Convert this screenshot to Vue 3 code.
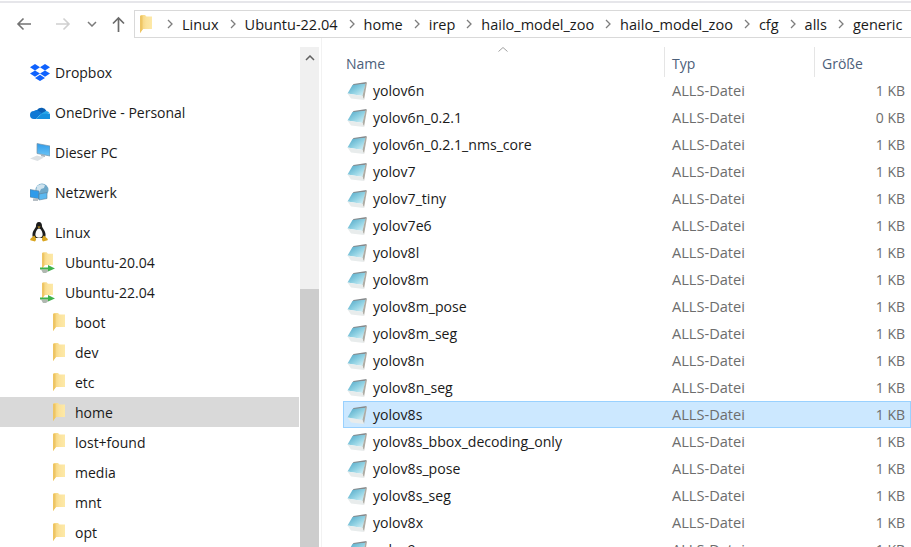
<template>
  <div class="explorer">
    <svg class="defs" width="0" height="0" aria-hidden="true">
      <defs>
        <linearGradient id="folderFill" x1="0" y1="0" x2="1" y2="0">
          <stop offset="0" stop-color="#f3cf73" />
          <stop offset="0.5" stop-color="#fbe29b" />
          <stop offset="1" stop-color="#fde9a8" />
        </linearGradient>
        <linearGradient id="allsFill" x1="0" y1="0" x2="1" y2="1">
          <stop offset="0" stop-color="#4aa3c4" />
          <stop offset="0.55" stop-color="#93d3e4" />
          <stop offset="1" stop-color="#e0f5f9" />
        </linearGradient>
        <linearGradient id="screenFill" x1="0" y1="0" x2="0" y2="1">
          <stop offset="0" stop-color="#2f9bea" />
          <stop offset="1" stop-color="#6cc4f5" />
        </linearGradient>
      </defs>
      <symbol id="folder" viewBox="0 0 12 18">
        <path d="M0 1 1 0h4l1.500 1.500H12V14H3L0 18Z" fill="url(#folderFill)" />
        <path d="M0 1h2.500v13.500L0 18Z" fill="#eec564" />
      </symbol>
      <symbol id="alls" viewBox="0 0 20 18">
        <path d="M6.500 2 19.500 0l-.5 2.200L5.500 3.500Z" fill="#85898c" />
        <path d="M5.500 3 18.500 1.800 15.500 14 .5 11.500Z" fill="url(#allsFill)" />
        <path d="M18.500 1 20 .5 17 18l-1.500-4Z" fill="#aeaca4" />
        <path d="M.5 11.500l15 2.500 1.500 4-13-1.500Z" fill="#e8ecec" />
      </symbol>
    </svg>

    <div class="top-line"></div>

    <header class="toolbar">
      <nav class="nav-buttons">
        <svg class="nav-icon back" width="16" height="14" viewBox="0 0 16 14">
          <path d="M15 7H2M7.500 1.500 2 7l5.500 5.500" fill="none" stroke="#737373" stroke-width="1.600" />
        </svg>
        <svg class="nav-icon forward" width="16" height="14" viewBox="0 0 16 14">
          <path d="M1 7h13M8.500 1.500 14 7l-5.500 5.500" fill="none" stroke="#d0d0d0" stroke-width="1.600" />
        </svg>
        <svg class="nav-icon recent" width="10" height="6" viewBox="0 0 10 6">
          <path d="M1 1l4 4 4-4" fill="none" stroke="#7b7b7b" stroke-width="1.500" />
        </svg>
        <svg class="nav-icon up" width="13" height="16" viewBox="0 0 13 16">
          <path d="M6.500 16V2M1 7.500 6.500 2 12 7.500" fill="none" stroke="#6b6b6b" stroke-width="1.700" />
        </svg>
      </nav>
      <div class="address">
        <svg class="address-folder" width="12" height="18" viewBox="0 0 12 18"><use href="#folder" /></svg>
        <span v-for="part in crumbs" :key="part.id" class="crumb">
          <svg class="chevron" width="6" height="10" viewBox="0 0 6 10">
            <path d="M1 1l4 4-4 4" fill="none" stroke="#7d7d7d" stroke-width="1.300" />
          </svg>
          <span class="crumb-text">{{ part.label }}</span>
        </span>
      </div>
    </header>

    <main class="body">
      <aside class="side">
        <ul class="tree">
          <li
            v-for="item in tree"
            :key="item.label"
            class="tree-row"
            :class="[item.level, { selected: item.label === 'home', spaced: item.spaced }]"
          >
            <span class="tree-icon">
              <svg v-if="item.icon === 'dropbox'" width="20" height="18" viewBox="0 0 20 18">
                <path
                  d="M5 1 0 4.200l5 3.200 5-3.200Zm10 0-5 3.200 5 3.200 5-3.200ZM0 10.600l5 3.200 5-3.200L5 7.400Zm15-3.200-5 3.200 5 3.200 5-3.200ZM5 15l5 3 5-3-5-3.200Z"
                  fill="#0f62fe"
                />
              </svg>
              <svg v-else-if="item.icon === 'onedrive'" width="20" height="14" viewBox="0 0 20 14">
                <path d="M7 5a5.500 5.500 0 0 1 9.500 1L11 10 6 6Z" fill="#0a5fb4" />
                <path d="M4 6a4 4 0 0 1 3-1l5 3-6 6H4A4 4 0 0 1 4 6Z" fill="#0f78d4" />
                <path d="M6 14l6-6 4-2a4 4 0 0 1 3.500 2Z" fill="#28a8ea" />
                <path d="M6 14h11a3 3 0 0 0 2.600-5.500L12 9Z" fill="#1490df" />
              </svg>
              <svg v-else-if="item.icon === 'pc'" width="20" height="19" viewBox="0 0 20 19">
                <path d="M7 .5 20 3v10L7 10.500Z" fill="url(#screenFill)" stroke="#7d95a8" stroke-width=".7" />
                <path d="M11 11.500l4 .8v1.700l-4-.8Z" fill="#aab6bf" />
                <path d="M0 15.500 7 12.500l7 2L7.500 18Z" fill="#dde1e4" />
              </svg>
              <svg v-else-if="item.icon === 'network'" width="20" height="19" viewBox="0 0 20 19">
                <circle cx="12" cy="7" r="6.500" fill="#6fa8c9" />
                <path d="M7 3c3-2 6-2 8-1l-1 3-3 1-2 4-3-1Z" fill="#cfe3ee" />
                <path d="M0 6.500 9 8v8L0 14Z" fill="#2f9bea" stroke="#5c7f99" stroke-width=".6" />
                <path d="M9 11l8-1.500v6L9 17Z" fill="#5cb8f0" stroke="#5c7f99" stroke-width=".6" />
                <path d="M3 15.500h5V18H3Z" fill="#b6bec4" />
              </svg>
              <svg v-else-if="item.icon === 'linux'" width="18" height="20" viewBox="0 0 18 20">
                <path d="M9 0c-2.200 0-3 1.800-3 4 0 2-3 4-3.500 8C2.200 14 3 16 4 16h10c1 0 1.800-2 1.500-4-.5-4-3.500-6-3.500-8 0-2.200-.8-4-3-4Z" fill="#1c1c1c" />
                <path d="M9 6.500c-1.600 0-3.600 3-3.600 6.300 0 1.700 1.500 3 3.600 3s3.600-1.300 3.600-3c0-3.300-2-6.300-3.600-6.300Z" fill="#fafafa" />
                <path d="M7.400 4.600h3.200L9 6.200Z" fill="#d9a520" />
                <path d="M4 13.500.5 16.800c-.7.800 0 1.500.8 1.700l3.700 1 1-1.500c.3-1-.5-3.500-2-4.500Zm10 0 3.500 3.300c.7.800 0 1.500-.8 1.700l-3.700 1-1-1.500c-.3-1 .5-3.500 2-4.500Z" fill="#d9a520" />
              </svg>
              <svg v-else-if="item.icon === 'mount'" width="15" height="21" viewBox="0 0 15 21">
                <use href="#folder" x="2" y="0" width="11" height="17" />
                <path d="M0 15.500h8V13l7 3.500-7 3v-2H0Z" fill="#3eb24a" />
                <path d="M1 17.500h7v2l-2 1.500H3Z" fill="#8f9a8f" opacity=".7" />
              </svg>
              <svg v-else width="12" height="18" viewBox="0 0 12 18"><use href="#folder" /></svg>
            </span>
            <span class="tree-label">{{ item.label }}</span>
          </li>
        </ul>
      </aside>

      <div class="scrollbar">
        <svg class="scroll-up" width="10" height="6" viewBox="0 0 10 6">
          <path d="M1 5l4-4 4 4" fill="none" stroke="#606060" stroke-width="1.500" />
        </svg>
        <div class="scroll-thumb"></div>
      </div>

      <section class="files">
        <div class="file-head">
          <svg class="sort-arrow" width="10" height="5" viewBox="0 0 10 5">
            <path d="M.5 4.500 5 .5l4.500 4" fill="none" stroke="#a0a0a0" />
          </svg>
          <div class="col col-name">Name</div>
          <div class="col col-type head-sep">Typ</div>
          <div class="col col-size head-sep">Größe</div>
        </div>
        <div
          v-for="file in files"
          :key="file.name"
          class="file-row"
          :class="{ selected: file.name === 'yolov8s' }"
        >
          <div class="col-name name-cell">
            <svg class="file-icon" width="20" height="18" viewBox="0 0 20 18"><use href="#alls" /></svg>
            <span>{{ file.name }}</span>
          </div>
          <div class="col-type meta">ALLS-Datei</div>
          <div class="col-size size">{{ file.size }} KB</div>
        </div>
      </section>
    </main>
  </div>
</template>

<script setup>
const crumbs = [
  'Linux',
  'Ubuntu-22.04',
  'home',
  'irep',
  'hailo_model_zoo',
  'hailo_model_zoo',
  'cfg',
  'alls',
  'generic',
].map((label, id) => ({ label, id }))

const tree = [
  { label: 'Dropbox', icon: 'dropbox', level: 'l0' },
  { label: 'OneDrive - Personal', icon: 'onedrive', level: 'l0', spaced: true },
  { label: 'Dieser PC', icon: 'pc', level: 'l0', spaced: true },
  { label: 'Netzwerk', icon: 'network', level: 'l0', spaced: true },
  { label: 'Linux', icon: 'linux', level: 'l0', spaced: true },
  { label: 'Ubuntu-20.04', icon: 'mount', level: 'l1' },
  { label: 'Ubuntu-22.04', icon: 'mount', level: 'l1' },
  ...['boot', 'dev', 'etc', 'home', 'lost+found', 'media', 'mnt', 'opt'].map((label) => ({
    label,
    icon: 'folder',
    level: 'l2',
  })),
]

const files = [
  { name: 'yolov6n', size: 1 },
  { name: 'yolov6n_0.2.1', size: 0 },
  { name: 'yolov6n_0.2.1_nms_core', size: 1 },
  { name: 'yolov7', size: 1 },
  { name: 'yolov7_tiny', size: 1 },
  { name: 'yolov7e6', size: 1 },
  { name: 'yolov8l', size: 1 },
  { name: 'yolov8m', size: 1 },
  { name: 'yolov8m_pose', size: 1 },
  { name: 'yolov8m_seg', size: 1 },
  { name: 'yolov8n', size: 1 },
  { name: 'yolov8n_seg', size: 1 },
  { name: 'yolov8s', size: 1 },
  { name: 'yolov8s_bbox_decoding_only', size: 1 },
  { name: 'yolov8s_pose', size: 1 },
  { name: 'yolov8s_seg', size: 1 },
  { name: 'yolov8x', size: 1 },
  { name: 'yolov9c', size: 1 },
]
</script>

<style>
html,
body {
  margin: 0;
  overflow: hidden;
  background: #fff;
}
</style>

<style scoped>
.explorer {
  width: 911px;
  height: 547px;
  overflow: hidden;
  display: flex;
  flex-direction: column;
  font-family: "Open Sans", "Noto Sans", sans-serif;
  font-size: 14px;
  color: #1a1a1a;
  background: #fff;
}

.defs {
  position: absolute;
}

.top-line {
  height: 2px;
  margin-top: 1px;
  background: #e6e6ea;
  flex: none;
}

.toolbar {
  display: flex;
  height: 35px;
  flex: none;
  padding-top: 7px;
  box-sizing: border-box;
}

.nav-buttons {
  width: 134px;
  flex: none;
  display: flex;
  align-items: center;
}

.nav-icon {
  flex: none;
}

.back {
  margin-left: 16px;
}

.forward {
  margin-left: 23px;
}

.recent {
  margin-left: 16px;
}

.up {
  margin-left: 15px;
}

.address {
  flex: 1;
  display: flex;
  align-items: center;
  border: 1px solid #d9d9d9;
  border-right: none;
  white-space: nowrap;
  overflow: hidden;
  padding-left: 5px;
}

.address-folder {
  flex: none;
  margin-right: 15px;
}

.crumb {
  display: flex;
  align-items: center;
}

.crumb-text {
  margin: 0 11px 0 9px;
  font-size: 14.5px;
}

.body {
  flex: 1;
  display: flex;
  min-height: 0;
}

.side {
  width: 300px;
  flex: none;
  padding-top: 19px;
  box-sizing: border-box;
}

.tree {
  list-style: none;
  margin: 0;
  padding: 0;
}

.tree-row {
  display: flex;
  align-items: center;
  height: 30px;
}

.tree-row.spaced {
  margin-top: 10px;
}

.tree-row.selected {
  background: #d9d9d9;
  margin-right: 1px;
}

.tree-icon {
  width: 25px;
  padding-left: 1px;
  flex: none;
  display: flex;
  align-items: center;
}

.l0 {
  padding-left: 27px;
}

.l0 .tree-icon {
  width: 25px;
  padding-left: 3px;
}

.l1 {
  padding-left: 39px;
}

.l2 {
  padding-left: 48px;
}

.l2 .tree-icon {
  width: 22px;
  padding-left: 5px;
}

.scrollbar {
  width: 19px;
  flex: none;
  margin-top: 9px;
  background: #f0f0f0;
  display: flex;
  flex-direction: column;
  align-items: center;
  padding-top: 8px;
  box-sizing: border-box;
}

.scroll-up {
  flex: none;
}

.scroll-thumb {
  margin-top: auto;
  width: 100%;
  height: 258px;
  background: #cdcdcd;
}

.files {
  flex: 1;
  min-width: 0;
  margin-left: 2px;
  border-left: 1px solid #f2f2f2;
  padding-left: 21px;
  overflow: hidden;
}

.file-head {
  position: relative;
  display: flex;
  height: 39px;
  padding-top: 9px;
  box-sizing: border-box;
  color: #4c607a;
}

.sort-arrow {
  position: absolute;
  left: 155px;
  top: 9px;
}

.col {
  display: flex;
  align-items: flex-end;
  padding-bottom: 4px;
}

.col-name {
  width: 321px;
  flex: none;
  padding-left: 3px;
  box-sizing: border-box;
}

.col-type {
  width: 150px;
  flex: none;
  box-sizing: border-box;
  padding-left: 7px;
}

.col-size {
  width: 97px;
  flex: none;
  box-sizing: border-box;
  padding-left: 7px;
}

.head-sep {
  border-left: 1px solid #e5e5e5;
}

.file-row {
  display: flex;
  align-items: center;
  height: 27px;
  box-sizing: border-box;
  border: 1px solid transparent;
}

.file-row.selected {
  background: #cce8ff;
  border-color: #99d1ff;
}

.name-cell {
  display: flex;
  align-items: center;
  padding-left: 3px;
  font-size: 14.1px;
}

.file-icon {
  flex: none;
  margin-right: 6px;
}

.meta {
  color: #6d6d6d;
  font-size: 14.6px;
  padding-bottom: 2px;
}

.size {
  color: #6d6d6d;
  text-align: right;
  padding-right: 7px;
}
</style>
